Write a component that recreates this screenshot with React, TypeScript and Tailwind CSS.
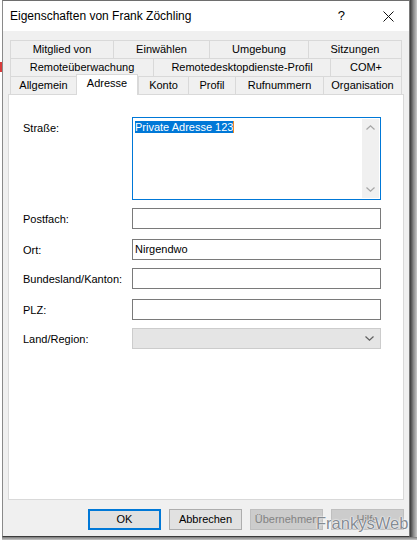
import React from 'react';

// Tab-Reihen (Breiten aus dem Dialog abgemessen)
const row1 = [
  { label: 'Mitglied von', w: 'w-[103px]' },
  { label: 'Einwählen', w: 'w-[96px]' },
  { label: 'Umgebung', w: 'w-[99px]' },
  { label: 'Sitzungen', w: 'w-[94px] border-r' },
];

const row2 = [
  { label: 'Remoteüberwachung', w: 'w-[143px]' },
  { label: 'Remotedesktopdienste-Profil', w: 'w-[177px]' },
  { label: 'COM+', w: 'w-[72px] border-r' },
];

const row3 = [
  { label: 'Allgemein', w: 'w-[66px]' },
  { label: 'Adresse', w: 'w-[62px]', active: true },
  { label: 'Konto', w: 'w-[50px]' },
  { label: 'Profil', w: 'w-[47px]' },
  { label: 'Rufnummern', w: 'w-[88px]' },
  { label: 'Organisation', w: 'w-[79px] border-r' },
];

type Tab = { label: string; w: string; active?: boolean };

function TabRow({ tabs }: { tabs: Tab[] }) {
  return (
    <div className="flex h-[18px] items-end">
      {tabs.map((t) =>
        t.active ? (
          <div
            key={t.label}
            className={`${t.w} relative z-10 -mb-[1px] flex h-[21px] items-center justify-center border-x border-t border-[#d9d9d9] bg-white pb-[3px]`}
          >
            {t.label}
          </div>
        ) : (
          <div
            key={t.label}
            className={`${t.w} flex h-[18px] items-center justify-center border-l border-t border-[#d9d9d9] bg-[#f0f0f0]`}
          >
            {t.label}
          </div>
        )
      )}
    </div>
  );
}

function Chevron({ up, color }: { up?: boolean; color: string }) {
  return (
    <svg width="9" height="5" viewBox="0 0 9 5">
      <polyline
        points={up ? '0.5,4.5 4.5,0.8 8.5,4.5' : '0.5,0.5 4.5,4.2 8.5,0.5'}
        fill="none"
        stroke={color}
        strokeWidth="1.2"
      />
    </svg>
  );
}

function Field({ label, value, mt }: { label: string; value?: string; mt: string }) {
  return (
    <div className={`flex items-center ${mt}`}>
      <div className="w-[109px] pt-[1px]">{label}</div>
      <div className="flex h-[21px] w-[249px] items-center border border-[#7a7a7a] bg-white pl-[2px]">
        {value}
      </div>
    </div>
  );
}

export default function App() {
  return (
    <div className="flex h-[540px] w-[417px] overflow-hidden bg-white font-['Liberation_Sans',Arial,sans-serif] text-[11px] text-black">
      {/* Hintergrund links */}
      <div className="flex w-[2px] flex-col">
        <div className="h-[62px]" />
        <div className="h-[10px] bg-[#d83b3b]" />
      </div>

      <div className="flex flex-col">
        <div className="flex">
          {/* Fenster */}
          <div className="relative flex h-[537px] w-[408px] flex-col border border-t-[#6e6e6e] border-l-[#8a8a8a] border-r-[#7a7a7a] border-b-[#3c3c3c] bg-[#f0f0f0]">
            {/* Titelleiste */}
            <div className="flex h-[30px] items-center bg-white pl-[7px] text-[12px]">
              <span>Eigenschaften von Frank Zöchling</span>
              <span className="ml-auto mr-[38px] text-[13px]">?</span>
              <svg width="11" height="11" viewBox="0 0 11 11" className="mr-[15px]">
                <path d="M0.5 0.5 L10.5 10.5 M10.5 0.5 L0.5 10.5" stroke="#111" strokeWidth="1" />
              </svg>
            </div>

            <div className="flex flex-1 flex-col pt-[9px]">
              {/* Registerkarten */}
              <div className="ml-[7px] w-[392px]">
                <TabRow tabs={row1} />
                <TabRow tabs={row2} />
                <TabRow tabs={row3} />
              </div>

              {/* Inhalt */}
              <div className="mx-[5px] h-[406px] border border-[#d9d9d9] bg-white pl-[14px] pt-[22px]">
                <div className="flex">
                  <div className="w-[109px] pt-[3px]">Straße:</div>
                  <div className="flex h-[83px] w-[249px] border border-[#0078d7] bg-white">
                    <div className="flex-1 pl-[2px] pt-[3px] leading-[12px]">
                      <span className="bg-[#0078d7] text-white">Private Adresse 123</span>
                      <span className="inline-block h-[12px] w-[1px] bg-[#f08a24] align-top" />
                    </div>
                    <div className="my-[1px] mr-[1px] flex w-[17px] flex-col items-center justify-between bg-[#f0f0f0] py-[6px]">
                      <Chevron up color="#a6a6a6" />
                      <Chevron color="#a6a6a6" />
                    </div>
                  </div>
                </div>

                <Field label="Postfach:" mt="mt-[8px]" />
                <Field label="Ort:" value="Nirgendwo" mt="mt-[10px]" />
                <Field label="Bundesland/Kanton:" mt="mt-[8px]" />
                <Field label="PLZ:" mt="mt-[10px]" />

                <div className="mt-[8px] flex items-center">
                  <div className="w-[109px] pt-[1px]">Land/Region:</div>
                  <div className="flex h-[21px] w-[249px] items-center justify-end border border-[#cccccc] bg-[#e5e5e5] pr-[6px]">
                    <Chevron color="#606060" />
                  </div>
                </div>
              </div>

              {/* Schaltflächen */}
              <div className="mt-[9px] flex justify-end gap-[8px] pr-[5px]">
                <button className="flex h-[21px] w-[73px] items-center justify-center border-2 border-[#0078d7] bg-[#e1e1e1]">
                  OK
                </button>
                <button className="flex h-[21px] w-[73px] items-center justify-center border border-[#adadad] bg-[#e1e1e1]">
                  Abbrechen
                </button>
                <button className="flex h-[21px] w-[73px] items-center justify-center border border-[#bfbfbf] bg-[#cccccc] text-[#838383]">
                  Übernehmen
                </button>
                <button className="flex h-[21px] w-[73px] items-center justify-center border border-[#bfbfbf] bg-[#cccccc] text-[#838383]">
                  Hilfe
                </button>
              </div>
            </div>

            {/* Wasserzeichen */}
            <div className="absolute left-[313px] top-[514px] text-[16.5px] leading-[16px] text-[#858b92] [text-shadow:0_0_2px_#fff,0_0_1px_#fff,0_0_1px_#fff]">
              FrankysWeb
            </div>
          </div>

          {/* Schatten rechts */}
          <div className="h-[537px] w-[7px] bg-gradient-to-r from-[#3a3a3a] via-[#8a8a8a] to-[#c8c8c8]" />
        </div>

        {/* Schatten unten */}
        <div className="h-[3px] bg-gradient-to-b from-[#7a7a7a] to-[#c8c8c8]" />
      </div>
    </div>
  );
}
